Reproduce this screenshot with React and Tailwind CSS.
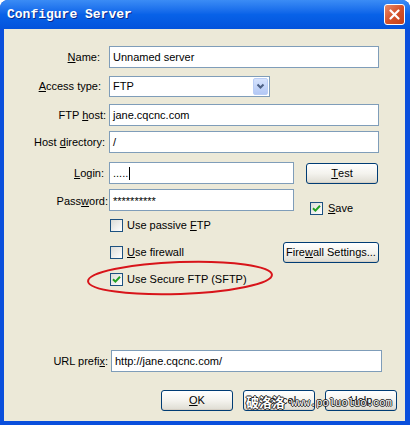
import React from 'react';

const sans = "font-['Tahoma','Liberation_Sans',sans-serif]";

function U({ children }) {
  return <span className="underline underline-offset-[1px]">{children}</span>;
}

function Field({ children, className = '' }) {
  return (
    <div className={`h-[22px] border border-[#7f9db9] bg-white flex items-center pl-[3px] text-[11px] text-black whitespace-nowrap ${className}`}>
      {children}
    </div>
  );
}

function XpButton({ children, className = '' }) {
  return (
    <div className={`h-[21px] rounded-[3px] border border-[#003c74] bg-linear-to-b from-white via-[#f4f3ee] to-[#dedcd2] flex items-center justify-center text-[11px] text-black shadow-[inset_0_-1px_0_#d6d0c5] ${className}`}>
      {children}
    </div>
  );
}

function Check({ checked }) {
  return (
    <div className="w-[13px] h-[13px] shrink-0 border border-[#1c5180] bg-linear-to-br from-[#dcdcd7] to-white flex items-center justify-center">
      {checked && (
        <svg width="9" height="9" viewBox="0 0 9 9">
          <path d="M1 4.2 L3.4 6.6 L8 1.8" stroke="#21a121" strokeWidth="2" fill="none" />
        </svg>
      )}
    </div>
  );
}

function Label({ children, className = '' }) {
  return <div className={`w-[104px] shrink-0 text-right text-[11px] text-black whitespace-nowrap ${className}`}>{children}</div>;
}

export default function App() {
  return (
    <div className={`w-[410px] h-[425px] flex flex-col bg-[#0a4fdc] rounded-t-[8px] overflow-hidden ${sans}`}>
      {/* title bar */}
      <div className="h-[29px] shrink-0 flex items-center justify-between pl-[7px] pr-[5px] bg-linear-to-b from-[#3b8cf5] via-[#0862e8] to-[#0353dc]">
        <span className="font-['Liberation_Mono',monospace] font-bold text-[13px] text-white [text-shadow:1px_1px_0_#0a2a8c] mt-[1px]">
          Configure Server
        </span>
        <div className="w-[21px] h-[21px] rounded-[3px] border border-white bg-linear-to-br from-[#e88a6a] via-[#d5522a] to-[#c1401a] flex items-center justify-center">
          <svg width="11" height="11" viewBox="0 0 11 11">
            <path d="M1.5 1.5 L9.5 9.5 M9.5 1.5 L1.5 9.5" stroke="white" strokeWidth="2.2" strokeLinecap="round" />
          </svg>
        </div>
      </div>

      {/* body */}
      <div className="flex-1 ml-[4px] mr-[5px] mb-[4px] bg-[#ece9d8] relative flex flex-col">
        <div className="flex items-center mt-[17px]">
          <Label className="pr-[8px]"><U>N</U>ame:</Label>
          <Field className="ml-[1px] w-[270px]">Unnamed server</Field>
        </div>

        <div className="flex items-center mt-[8px]">
          <Label className="pr-[7px]"><U>A</U>ccess type:</Label>
          <div className="ml-[1px] w-[161px] h-[21px] border border-[#7f9db9] bg-white flex items-center justify-between pl-[3px] pr-[1px] text-[11px]">
            <span>FTP</span>
            <div className="w-[15px] h-[17px] rounded-[2px] border border-[#b9cdf6] bg-linear-to-b from-[#d6e3fd] to-[#b3c8f5] flex items-center justify-center">
              <svg width="9" height="7" viewBox="0 0 9 7">
                <path d="M1.5 1.5 L4.5 4.5 L7.5 1.5" stroke="#4d6185" strokeWidth="2" fill="none" />
              </svg>
            </div>
          </div>
        </div>

        <div className="flex items-center mt-[7px]">
          <Label className="pr-[2px]">FTP <U>h</U>ost:</Label>
          <Field className="ml-[1px] w-[270px]">jane.cqcnc.com</Field>
        </div>

        <div className="flex items-center mt-[5px]">
          <Label className="pr-[3px]">Host <U>d</U>irectory:</Label>
          <Field className="ml-[1px] w-[270px]">/</Field>
        </div>

        <div className="flex items-center mt-[9px]">
          <Label className="pr-[4px]"><U>L</U>ogin:</Label>
          <Field className="ml-[1px] w-[185px] h-[21px]">
            <span>.....</span>
            <span className="w-[1px] h-[13px] bg-black ml-[1px]" />
          </Field>
          <XpButton className="ml-[12px] w-[72px]"><U>T</U>est</XpButton>
        </div>

        <div className="flex items-start h-[22px] mt-[5px]">
          <Label className="pr-[0px] mt-[4px]">Pass<U>w</U>ord:</Label>
          <Field className="ml-[1px] w-[185px] text-[8px] items-start pt-[3px]">**********</Field>
          <div className="flex items-center h-[13px] ml-[16px] mt-[13px] gap-[5px] text-[11px] leading-none">
            <Check checked />
            <span><U>S</U>ave</span>
          </div>
        </div>

        <div className="flex items-center h-[13px] mt-[8px] pl-[106px] gap-[4px] text-[11px] leading-none">
          <Check />
          <span>Use passive <U>F</U>TP</span>
        </div>

        <div className="flex items-center justify-between h-[21px] mt-[10px] pl-[106px] pr-[26px] text-[11px] leading-none">
          <div className="flex items-center gap-[4px]">
            <Check />
            <span><U>U</U>se firewall</span>
          </div>
          <XpButton className="w-[96px]">Fire<U>w</U>all Settings...</XpButton>
        </div>

        <div className="flex items-center h-[13px] mt-[10px] pl-[106px] gap-[4px] text-[11px] leading-none">
          <Check checked />
          <span>Use Secure FTP (SFTP)</span>
        </div>

        <div className="flex items-center mt-[64px]">
          <Label className="w-[100px] pr-[0px]">URL prefi<U>x</U>:</Label>
          <Field className="ml-[3px] w-[271px]">http://jane.cqcnc.com/</Field>
        </div>

        <div className="flex justify-end gap-[10px] mt-[18px] pr-[8px]">
          <XpButton className="w-[72px]"><U>O</U>K</XpButton>
          <XpButton className="w-[72px]">Cancel</XpButton>
          <XpButton className="w-[72px]">Help</XpButton>
        </div>

        {/* red hand-drawn ellipse */}
        <svg className="absolute left-[80px] top-[230px]" width="196" height="40" viewBox="0 0 196 40">
          <ellipse cx="96" cy="19" rx="92" ry="16" transform="rotate(-2 96 19)" fill="none" stroke="#d8141a" strokeWidth="2" />
        </svg>

        {/* watermark */}
        <div className="absolute left-[242px] top-[366px] flex items-end gap-[6px] pointer-events-none">
          <span className="font-['Noto_Sans_CJK_SC',sans-serif] font-bold text-[13px] leading-none text-white [text-shadow:1px_0_0_#222,-1px_0_0_#222,0_1px_0_#222,0_-1px_0_#222]">
            破洛洛
          </span>
          <span className="font-['Liberation_Mono',monospace] text-[10.5px] leading-none text-white [text-shadow:1px_0_0_#222,-1px_0_0_#222,0_1px_0_#222,0_-1px_0_#222]">
            www.poluoluo.com
          </span>
        </div>
      </div>
    </div>
  );
}
